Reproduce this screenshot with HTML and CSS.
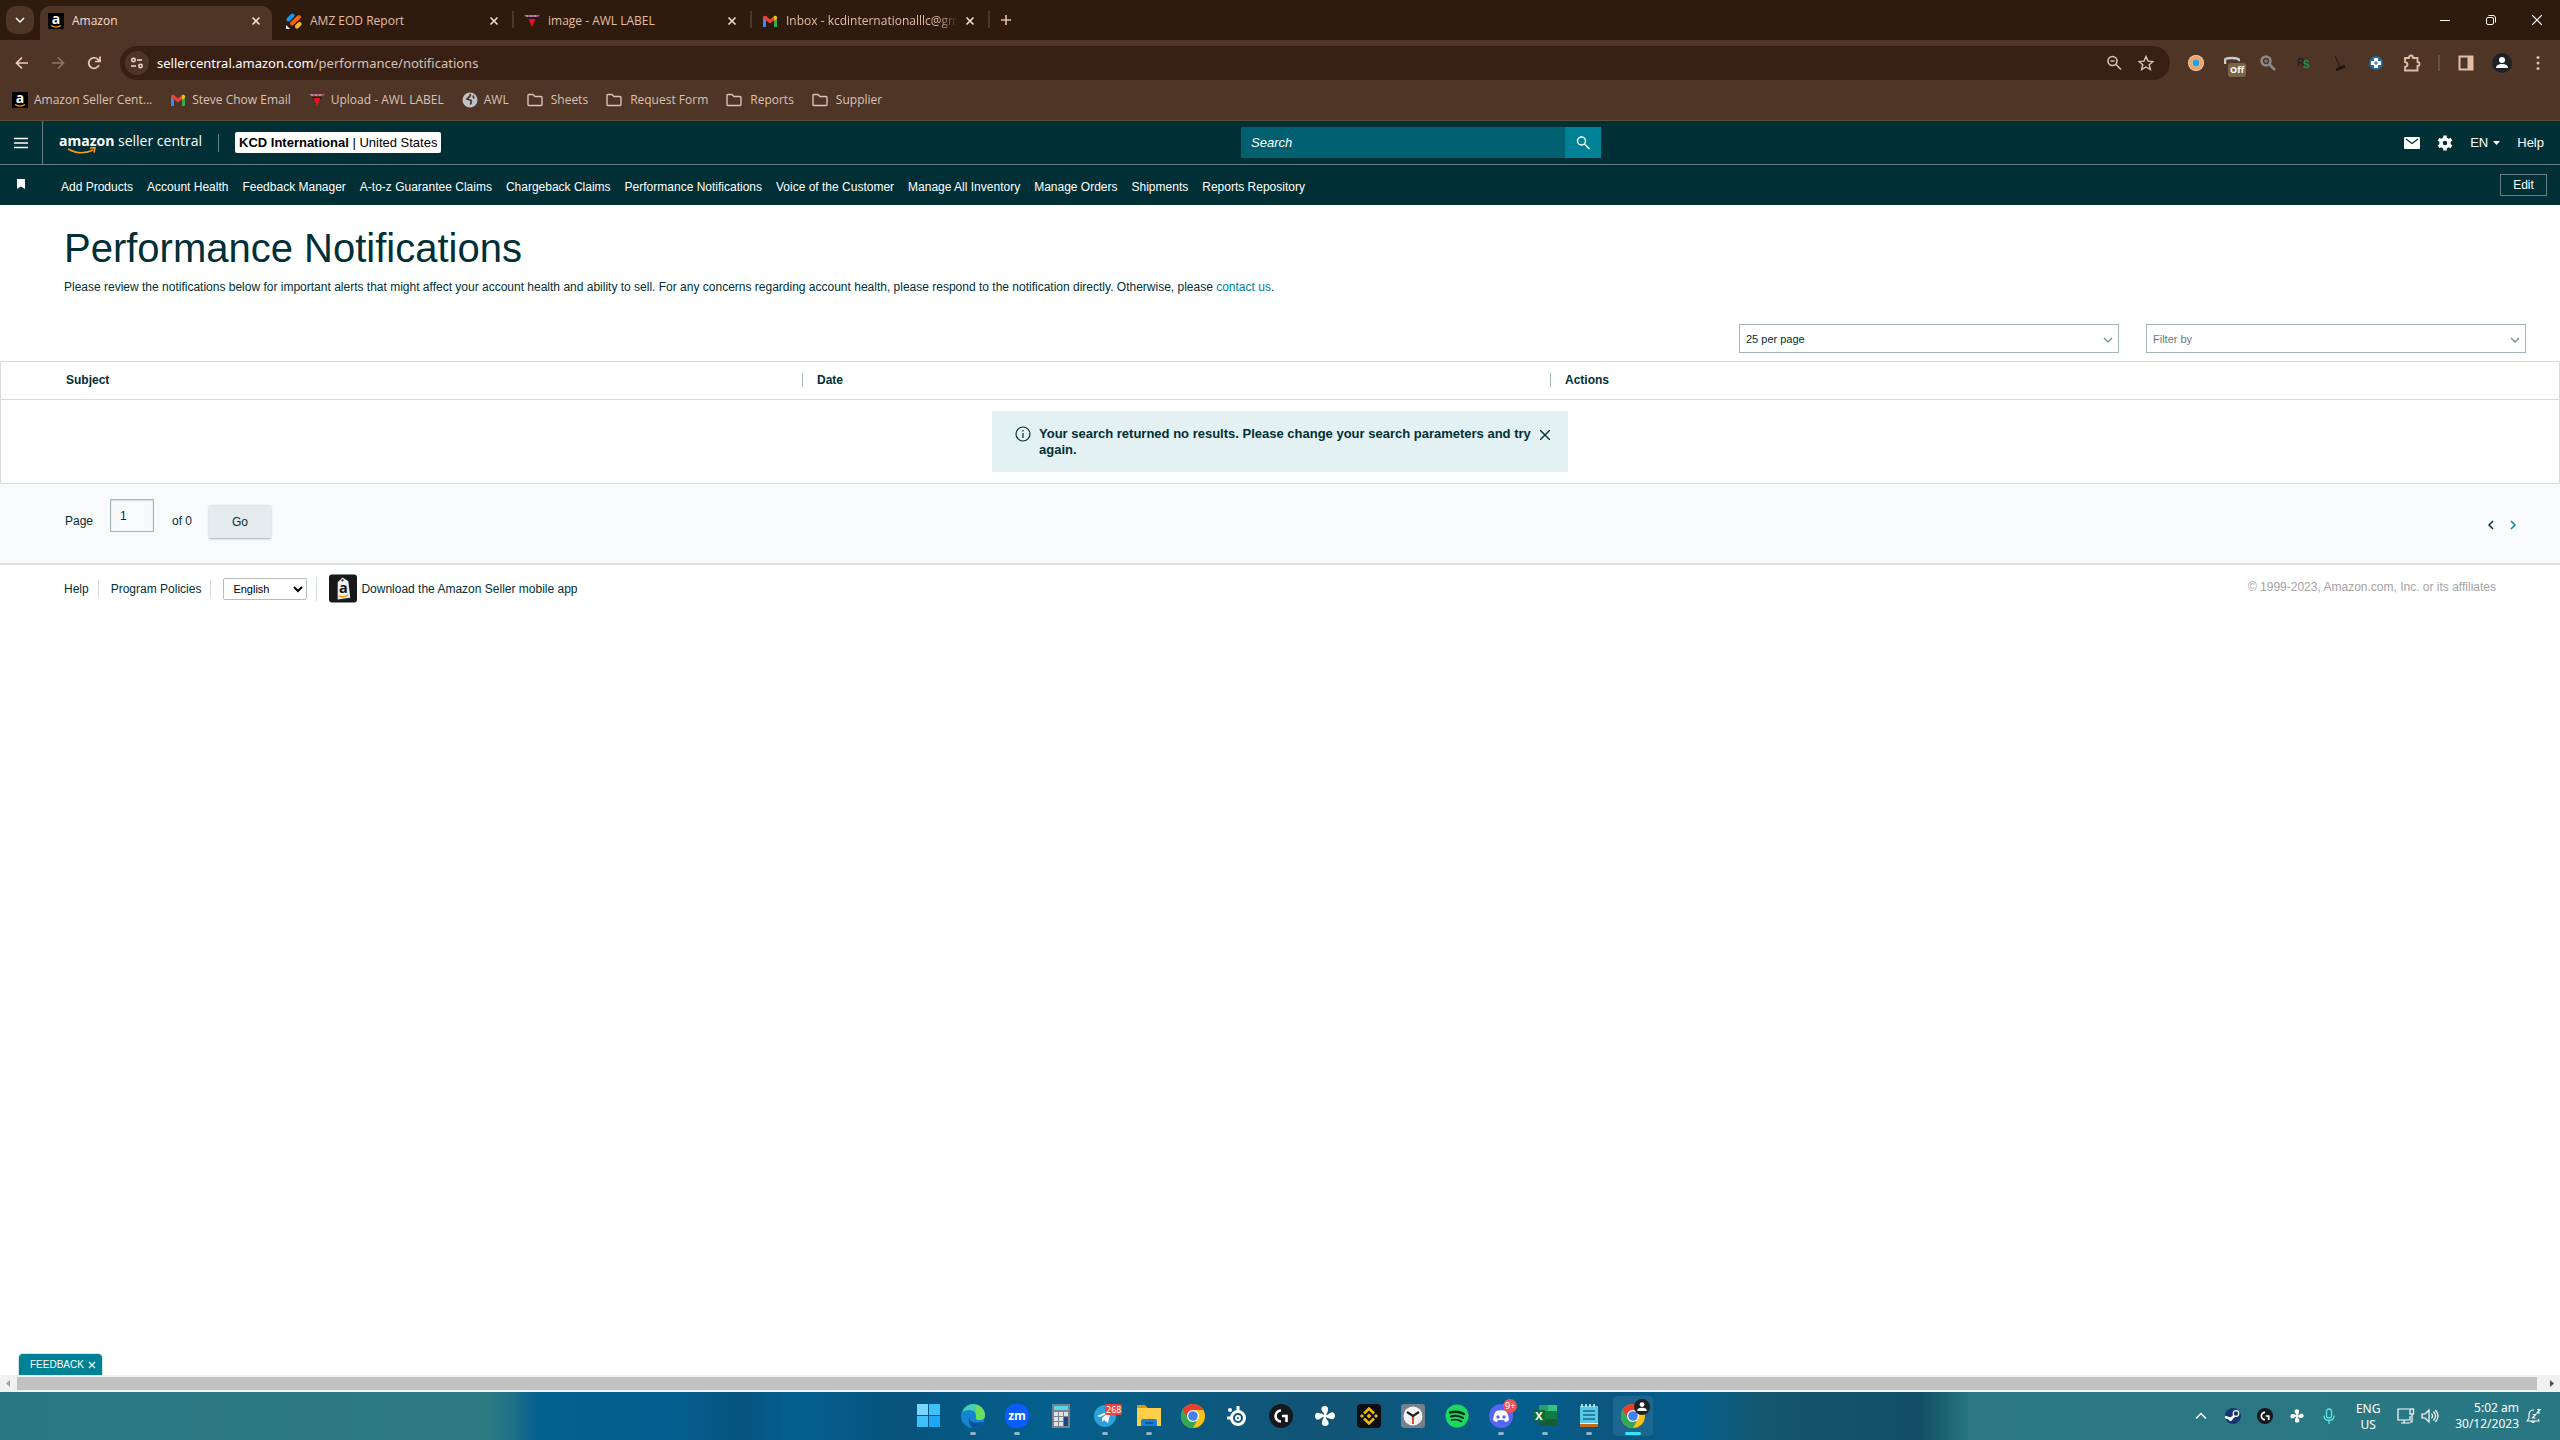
FILE: index.html
```
<!DOCTYPE html>
<html lang="en">
<head>
	<meta charset="utf-8">
	<title>Amazon</title>
	<link rel="stylesheet" href="styles.css">
</head>
<body>
	<!-- Shared icons -->
	<svg class="defs" aria-hidden="true">
		<symbol id="i-close" viewBox="0 0 16 16"><path d="M4.5 4.5l7 7M11.5 4.5l-7 7" fill="none" stroke="currentColor" stroke-width="1.6"/></symbol>
		<symbol id="i-amazon" viewBox="0 0 16 16"><rect width="16" height="16" fill="#000"/><text x="8" y="11" text-anchor="middle" font-family="Open Sans" font-weight="bold" font-size="14" fill="#fff">a</text><path d="M3 12.5q5 3.200 10 0" fill="none" stroke="#f90" stroke-width="1.300"/></symbol>
		<symbol id="i-gmail" viewBox="0 0 16 16"><path d="M1 4v10h3V7z" fill="#4285f4"/><path d="M15 4v10h-3V7z" fill="#34a853"/><path d="M1 4q1-2 3-1l4 3.500L12 3v4l-4 3.500L1 5z" fill="#ea4335"/><path d="M12 3q2-1 3 1v1.500L12 8z" fill="#fbbc04"/></symbol>
		<symbol id="i-awl" viewBox="0 0 16 16"><path d="M0 2h16l-2 2H2z" fill="#a05a9a"/><path d="M2 3h2M6 3h2M10 3h2" stroke="#e6c24a"/><path d="M3 5h10l-2 3H5z" fill="#24123f"/><path d="M4.500 6h7L8 14z" fill="#f0101c"/></symbol>
		<symbol id="i-folder" viewBox="0 0 16 16"><path d="M1 3.500q0-1 1-1h4l2 2h6q1 0 1 1v7q0 1-1 1H2q-1 0-1-1z" fill="none" stroke="currentColor" stroke-width="1.400"/></symbol>
		<symbol id="i-chrome" viewBox="0 0 24 24"><circle cx="12" cy="12" r="12" fill="#fbc116"/><path d="M12 12L1.600 6A12 12 0 0 0 12 24l5-9z" fill="#34a853"/><path d="M12 12H5.500L1.600 6a12 12 0 0 1 20.800 0H12z" fill="#ea3e30"/><circle cx="12" cy="12" r="6" fill="#fff"/><circle cx="12" cy="12" r="4.800" fill="#3f82ef"/></symbol>
		<symbol id="i-fan" viewBox="0 0 24 24"><g fill="#fff"><path d="M12 12Q11 9 9 7 7 3 11 2q5 0 4 4 0 3-3 6z"/><path d="M12 12Q11 9 9 7 7 3 11 2q5 0 4 4 0 3-3 6z" transform="rotate(90 12 12)"/><path d="M12 12Q11 9 9 7 7 3 11 2q5 0 4 4 0 3-3 6z" transform="rotate(180 12 12)"/><path d="M12 12Q11 9 9 7 7 3 11 2q5 0 4 4 0 3-3 6z" transform="rotate(270 12 12)"/><circle cx="12" cy="12" r="2"/></g></symbol>
		<symbol id="i-ghub" viewBox="0 0 24 24"><circle cx="12" cy="12" r="12" fill="#17181b"/><path d="M12 6.500a5.500 5.500 0 1 0 0 11M13 12h4.500v6" fill="none" stroke="#fff" stroke-width="2.600"/></symbol>
		<symbol id="i-person" viewBox="0 0 20 20"><circle cx="10" cy="10" r="10" fill="#202124"/><circle cx="10" cy="7" r="3" fill="#fff"/><path d="M4 15q0-4 6-4t6 4z" fill="#fff"/></symbol>
		<symbol id="i-down" viewBox="0 0 10 10"><path d="M1 3l4 4 4-4" fill="none" stroke="currentColor" stroke-width="1.500"/></symbol>
	</svg>

	<div class="browser">
		<div class="tabstrip">
			<button class="tab-search" aria-label="Search tabs"><svg width="10" height="10"><use href="#i-down"/></svg></button>
			<div class="tab active">
				<svg width="16" height="16"><use href="#i-amazon"/></svg>
				<span class="tab-title">Amazon</span>
				<button class="tab-close" aria-label="Close"><svg width="16" height="16"><use href="#i-close"/></svg></button>
			</div>
			<div class="tab">
				<svg width="16" height="16" viewBox="0 0 16 16" fill="none" stroke-width="4" stroke-linecap="round"><path d="M2.500 6.500l4-4" stroke="#0a99ff"/><path d="M6 10.500L13 4" stroke="#ff6100"/><path d="M11 13.500l2.500-2.500" stroke="#ffb629"/><path d="M0 12l4 4H0z" fill="#fff"/></svg>
				<span class="tab-title">AMZ EOD Report</span>
				<button class="tab-close" aria-label="Close"><svg width="16" height="16"><use href="#i-close"/></svg></button>
			</div>
			<div class="tab">
				<svg width="16" height="16"><use href="#i-awl"/></svg>
				<span class="tab-title">image - AWL LABEL</span>
				<button class="tab-close" aria-label="Close"><svg width="16" height="16"><use href="#i-close"/></svg></button>
			</div>
			<div class="tab">
				<svg width="16" height="16"><use href="#i-gmail"/></svg>
				<span class="tab-title fade">Inbox - kcdinternationalllc@gm</span>
				<button class="tab-close" aria-label="Close"><svg width="16" height="16"><use href="#i-close"/></svg></button>
			</div>
			<button class="new-tab" aria-label="New tab"><svg width="10" height="10" viewBox="0 0 10 10"><path d="M5 0v10M0 5h10" stroke="currentColor" stroke-width="1.600"/></svg></button>
			<div class="window-buttons">
				<button aria-label="Minimize"><svg width="10" height="10" viewBox="0 0 10 10"><path d="M0 5.500h10" stroke="#fff"/></svg></button>
				<button aria-label="Restore"><svg width="10" height="10" viewBox="0 0 10 10" fill="none" stroke="#fff"><rect x=".5" y="2.500" width="7" height="7" rx="1.500"/><path d="M2.500.500H7q2.500 0 2.500 2.500v4.500"/></svg></button>
				<button aria-label="Close window"><svg width="10" height="10" viewBox="0 0 10 10"><path d="M0 0l10 10M10 0L0 10" stroke="#fff" stroke-width="1.200"/></svg></button>
			</div>
		</div>

		<div class="toolbar">
			<button class="nav-button" aria-label="Back"><svg width="16" height="16" viewBox="0 0 16 16" fill="none" stroke="currentColor" stroke-width="1.700"><path d="M14 8H3M8 2.500L2.500 8 8 13.500"/></svg></button>
			<button class="nav-button off" aria-label="Forward"><svg width="16" height="16" viewBox="0 0 16 16" fill="none" stroke="currentColor" stroke-width="1.700"><path d="M2 8h11M8 2.500L13.500 8 8 13.500"/></svg></button>
			<button class="nav-button" aria-label="Reload"><svg width="16" height="16" viewBox="0 0 16 16" fill="none" stroke="currentColor" stroke-width="1.700"><path d="M13 10A5.300 5.300 0 1 1 12 4.500L13.500 6M14 1.500v5H9"/></svg></button>
			<div class="omnibox">
				<button class="site-info" aria-label="Site information"><svg width="14" height="14" viewBox="0 0 14 14" fill="none" stroke="currentColor" stroke-width="1.500"><circle cx="3.500" cy="4" r="1.700"/><path d="M7 4h5M1 10h5"/><circle cx="10.500" cy="10" r="1.700"/></svg></button>
				<span class="url"><b>sellercentral.amazon.com</b>/performance/notifications</span>
				<svg width="16" height="16" viewBox="0 0 16 16" fill="none" stroke="currentColor" stroke-width="1.600"><circle cx="6.500" cy="6" r="4.500"/><path d="M10 9.500l5 5M4.500 6h4"/></svg>
				<svg width="16" height="16" viewBox="0 0 16 16" fill="none" stroke="currentColor" stroke-width="1.400"><path d="M8 1.500l2 4.600 5 .400-3.800 3.200 1.200 4.800L8 12l-4.400 2.500 1.200-4.800L1 6.500l5-.400z"/></svg>
			</div>
			<div class="extensions">
				<svg width="16" height="16" viewBox="0 0 16 16"><circle cx="8" cy="8" r="8" fill="#f2dfc9"/><circle cx="8" cy="8" r="5.500" fill="none" stroke="#f5a05c" stroke-width="3.500"/><circle cx="8" cy="8" r="3.400" fill="#1fa0ea"/></svg>
				<div class="ext-off">
					<svg width="16" height="16" viewBox="0 0 16 16"><path d="M1 9V5q0-2 7-2t8 3" fill="none" stroke="#c9ccce" stroke-width="2.500"/></svg>
					<span>Off</span>
				</div>
				<svg width="16" height="16" viewBox="0 0 16 16" fill="none" stroke="#8a8a88" stroke-width="2.600"><circle cx="6" cy="6" r="4.500"/><path d="M9.500 9.500l5.500 5.500"/><path d="M6 4v4M4 6h4" stroke-width="1"/></svg>
				<svg width="16" height="16" viewBox="0 0 16 16" font-family="Liberation Sans" font-weight="bold" font-size="10"><text x="1" y="11" fill="#222">R</text><text x="7" y="13" fill="#159447">S</text></svg>
				<svg width="16" height="16" viewBox="0 0 16 16" fill="none" stroke="#1d1613"><path d="M3 1l5 11"/><path d="M4 15l9-4" stroke-width="2.500"/></svg>
				<svg width="16" height="16" viewBox="0 0 16 16"><circle cx="8" cy="8" r="7" fill="#26699b"/><path d="M8 3v10M3 8h10" stroke="#fff" stroke-width="4"/><path d="M8 6v4M6 8h4" stroke="#26699b"/></svg>
				<svg class="puzzle" width="18" height="18" viewBox="0 0 18 18" fill="none" stroke="currentColor" stroke-width="1.800"><path d="M2 4h4q0-2.500 2-2.500T10 4h4.500v4q2 0 2 2t-2 2v4.500H2V13q2.500-.500 2.500-2.500T2 8z"/></svg>
			</div>
			<span class="toolbar-line"></span>
			<div class="profile">
				<svg width="16" height="16" viewBox="0 0 16 16" fill="none" stroke="currentColor" stroke-width="2"><rect x="1.500" y="1.500" width="13" height="13"/><path d="M12 2v12" stroke-width="5"/></svg>
				<svg width="20" height="20"><use href="#i-person"/></svg>
				<svg width="16" height="16" viewBox="0 0 16 16" fill="currentColor"><circle cx="8" cy="2.500" r="1.500"/><circle cx="8" cy="8" r="1.500"/><circle cx="8" cy="13.500" r="1.500"/></svg>
			</div>
		</div>

		<div class="bookmarks">
			<a href="#"><svg width="16" height="16"><use href="#i-amazon"/></svg>Amazon Seller Cent...</a>
			<a href="#"><svg width="16" height="16"><use href="#i-gmail"/></svg>Steve Chow Email</a>
			<a href="#"><svg width="16" height="16"><use href="#i-awl"/></svg>Upload - AWL LABEL</a>
			<a href="#"><svg width="16" height="16" viewBox="0 0 16 16"><circle cx="8" cy="8" r="7.500" fill="#bfc3c7"/><path d="M8 2q1 2-1 3L5 7l4 1.500q1 2-1 4M11 3.500l1 3" fill="none" stroke="#4f3526" stroke-width="1.700"/></svg>AWL</a>
			<a class="folder" href="#"><svg width="16" height="16"><use href="#i-folder"/></svg>Sheets</a>
			<a class="folder" href="#"><svg width="16" height="16"><use href="#i-folder"/></svg>Request Form</a>
			<a class="folder" href="#"><svg width="16" height="16"><use href="#i-folder"/></svg>Reports</a>
			<a class="folder" href="#"><svg width="16" height="16"><use href="#i-folder"/></svg>Supplier</a>
		</div>
	</div>

	<header class="sc-header">
		<div class="sc-top">
			<div class="sc-left">
				<button class="menu" aria-label="Menu"><svg width="14" height="12" viewBox="0 0 14 12"><path d="M0 1.500h14M0 6h14M0 10.500h14" stroke="#fff" stroke-width="1.600"/></svg></button>
				<a class="logo" href="#">
					<span><b>amazon</b> seller central</span>
					<svg class="smile" width="30" height="8" viewBox="0 0 30 8" fill="none" stroke="#f7981d" stroke-width="1.600"><path d="M1 2q13 7 25 1M23 1l5-.300-1 5"/></svg>
				</a>
				<span class="top-line"></span>
				<button class="account"><b>KCD International</b> | United States</button>
			</div>
			<form class="search">
				<input type="text" placeholder="Search" aria-label="Search">
				<button type="button" aria-label="Search"><svg width="16" height="16" viewBox="0 0 16 16" fill="none" stroke="#fff" stroke-width="1.500"><circle cx="6.500" cy="6" r="4"/><path d="M9.500 9l5 5"/></svg></button>
			</form>
			<div class="sc-right">
				<svg width="16" height="12" viewBox="0 0 16 12"><rect width="16" height="12" rx="1" fill="#fff"/><path d="M2 2l6 4.500L14 2" fill="none" stroke="#002f36" stroke-width="1.300"/></svg>
				<svg width="16" height="16" viewBox="0 0 16 16" fill="none" stroke="#fff"><circle cx="8" cy="8" r="4" stroke-width="3.500"/><path d="M8 .500v3M8 12.500v3M1.500 4.200l2.600 1.500M11.900 10.300l2.600 1.500M1.500 11.800l2.600-1.500M11.900 5.700l2.600-1.500" stroke-width="3.500"/></svg>
				<button class="lang">EN<svg width="7" height="4" viewBox="0 0 7 4"><path d="M0 0h7L3.500 4z" fill="#fff"/></svg></button>
				<a href="#">Help</a>
			</div>
		</div>
		<nav class="sc-nav">
			<svg class="flag" width="8" height="10" viewBox="0 0 8 10"><path d="M0 0h8v10L4 7.500 0 10z" fill="#fff"/></svg>
			<a href="#">Add Products</a>
			<a href="#">Account Health</a>
			<a href="#">Feedback Manager</a>
			<a href="#">A-to-z Guarantee Claims</a>
			<a href="#">Chargeback Claims</a>
			<a href="#">Performance Notifications</a>
			<a href="#">Voice of the Customer</a>
			<a href="#">Manage All Inventory</a>
			<a href="#">Manage Orders</a>
			<a href="#">Shipments</a>
			<a href="#">Reports Repository</a>
			<button class="edit">Edit</button>
		</nav>
	</header>

	<main>
		<div class="intro">
			<h1>Performance Notifications</h1>
			<p>Please review the notifications below for important alerts that might affect your account health and ability to sell. For any concerns regarding account health, please respond to the notification directly. Otherwise, please <a href="#">contact us</a>.</p>
		</div>

		<div class="filters">
			<div class="picker">
				<select aria-label="Results per page"><option>25 per page</option></select>
				<svg width="10" height="10"><use href="#i-down"/></svg>
			</div>
			<div class="picker empty">
				<select aria-label="Filter by"><option>Filter by</option></select>
				<svg width="10" height="10"><use href="#i-down"/></svg>
			</div>
		</div>

		<table class="results">
			<thead>
				<tr><th class="subject"><span>Subject</span></th><th class="date"><span>Date</span></th><th><span>Actions</span></th></tr>
			</thead>
			<tbody>
				<tr>
					<td colspan="3">
						<div class="alert">
							<svg width="16" height="16" viewBox="0 0 16 16" fill="none" stroke="#002f36" stroke-width="1.200"><circle cx="8" cy="8" r="7"/><path d="M8 7v5M8 4v1.500"/></svg>
							<p>Your search returned no results. Please change your search parameters and try again.</p>
							<button aria-label="Dismiss"><svg width="10" height="10" viewBox="0 0 10 10"><path d="M0 0l10 10M10 0L0 10" stroke="#002f36" stroke-width="1.400"/></svg></button>
						</div>
					</td>
				</tr>
			</tbody>
		</table>

		<div class="pager">
			<label for="page">Page</label>
			<input id="page" type="text" value="1">
			<span class="of">of 0</span>
			<button class="go">Go</button>
			<div class="arrows">
				<button aria-label="Previous page"><svg width="6" height="10" viewBox="0 0 6 10"><path d="M5 1L1 5l4 4" fill="none" stroke="#002f36" stroke-width="1.500"/></svg></button>
				<button aria-label="Next page"><svg width="6" height="10" viewBox="0 0 6 10"><path d="M1 1l4 4-4 4" fill="none" stroke="#008296" stroke-width="1.500"/></svg></button>
			</div>
		</div>

		<footer>
			<a class="cell" href="#">Help</a>
			<a class="cell policies" href="#">Program Policies</a>
			<div class="cell language"><select aria-label="Language"><option>English</option></select></div>
			<a class="app" href="#">
				<svg width="28" height="29" viewBox="0 0 29 29"><rect width="29" height="29" rx="3" fill="#17181a"/><path d="M9 8l5-5 6 4 2 17-13 2z" fill="#eee"/><circle cx="14" cy="6" r="1.200" fill="#222"/><text x="15" y="19" text-anchor="middle" font-family="Open Sans" font-weight="bold" font-size="15" fill="#111">a</text><path d="M10 22q5 3 10-1" fill="none" stroke="#f90" stroke-width="1.400"/></svg>
				Download the Amazon Seller mobile app
			</a>
			<span class="copyright">© 1999-2023, Amazon.com, Inc. or its affiliates</span>
		</footer>
	</main>

	<button class="feedback">FEEDBACK <svg width="8" height="8" viewBox="0 0 8 8"><path d="M1 1l6 6M7 1L1 7" stroke="#fff" stroke-width="1.200"/></svg></button>

	<div class="scrollbar">
		<svg width="17" height="17" viewBox="0 0 17 17"><path d="M10 5v7L6 8.500z" fill="#a3a3a3"/></svg>
		<div class="thumb"></div>
		<svg width="23" height="17" viewBox="0 0 23 17"><path d="M13 5v7l4-3.500z" fill="#505050"/></svg>
	</div>

	<div class="taskbar">
		<div class="apps">
			<div class="app-icon"><svg width="24" height="24" viewBox="0 0 24 24" fill="#3fc0fb"><path d="M0 0h11v11H0z" fill="#7ad6ff"/><path d="M12 0h11v11H12zM0 12h11v11H0z"/><path d="M12 12h11v11H12z" fill="#1ea6f8"/></svg></div>
			<div class="app-icon open"><svg width="24" height="24" viewBox="0 0 24 24"><circle cx="12" cy="12" r="12" fill="#1583cf"/><path d="M1 9Q4 0 13 0q10 1 11 11 0 5-6 5-4 0-3-4 0-6-7-6-5 0-7 3z" fill="#45cfae"/><path d="M15 1q8 2 9 10 0 5-6 5-4 0-3-4z" fill="#6be05a"/><path d="M8 13q1 8 14 5-3 6-10 6-5-3-4-11z" fill="#0c4f9d"/></svg></div>
			<div class="app-icon open"><svg width="24" height="24" viewBox="0 0 24 24"><rect width="24" height="24" rx="10" fill="#0b5cff"/><text x="12" y="16" text-anchor="middle" font-family="Open Sans" font-weight="bold" font-size="12" fill="#fff">zm</text></svg></div>
			<div class="app-icon"><svg width="24" height="24" viewBox="0 0 24 24"><rect x="3" width="18" height="24" rx="1" fill="#7b828a"/><rect x="5" y="2" width="14" height="4" fill="#4fd8f2"/><path d="M5 8h4v4H5zM10 8h4v4h-4zM15 8h4v4h-4zM5 13h4v4H5zM10 13h4v4h-4zM5 18h4v4H5zM10 18h4v4h-4z" fill="#dfe3e7"/><path d="M15 13h4v9h-4z" fill="#124789"/></svg></div>
			<div class="app-icon open"><svg width="24" height="24" viewBox="0 0 24 24"><circle cx="12" cy="12" r="11" fill="#2aa1da"/><path d="M4 12l14-6-3 13-4-3-2 2v-4l6-5-8 4z" fill="#fff"/></svg><span class="count">268</span></div>
			<div class="app-icon open"><svg width="24" height="24" viewBox="0 0 24 24"><path d="M0 1h8l3 3v3H0z" fill="#d59a12"/><path d="M0 4h24v18H0z" fill="#ffcf4a"/><path d="M4 22v-5q0-2 2-2h12q2 0 2 2v5z" fill="#1a7fd0"/><path d="M8 19h8" stroke="#0b57a0" stroke-width="2"/></svg></div>
			<div class="app-icon"><svg width="24" height="24"><use href="#i-chrome"/></svg></div>
			<div class="app-icon"><svg width="24" height="24" viewBox="0 0 24 24" fill="none" stroke="#fff"><circle cx="13" cy="14" r="6.500" stroke-width="3"/><circle cx="13" cy="14" r="2" stroke-width="2"/><path d="M13 2v5M2 14h5" stroke-width="3"/><circle cx="5" cy="6" r="1" stroke-width="2"/></svg></div>
			<div class="app-icon"><svg width="24" height="24"><use href="#i-ghub"/></svg></div>
			<div class="app-icon"><svg width="24" height="24"><use href="#i-fan"/></svg></div>
			<div class="app-icon"><svg width="24" height="24" viewBox="0 0 24 24"><rect width="24" height="24" rx="4" fill="#0c0e12"/><path d="M7 9.500l5-5 5 5M7 14.500l5 5 5-5" fill="none" stroke="#f0b90b" stroke-width="2.600"/><path d="M12 9.500l2.500 2.500-2.500 2.500L9.500 12zM5 10l2 2-2 2-2-2zM19 10l2 2-2 2-2-2z" fill="#f0b90b"/></svg></div>
			<div class="app-icon"><svg width="24" height="24" viewBox="0 0 24 24"><rect width="24" height="24" rx="3" fill="#77818c"/><circle cx="12" cy="12" r="9.500" fill="#f2f2f2"/><path d="M6 8l6 4 6-4M12 12v3" fill="none" stroke="#222" stroke-width="2.200"/><path d="M12 13v7" stroke="#d9531e" stroke-width="2"/></svg></div>
			<div class="app-icon"><svg width="24" height="24" viewBox="0 0 24 24" fill="none" stroke="#10251a" stroke-linecap="round"><circle cx="12" cy="12" r="11.500" fill="#1ed760" stroke="none"/><path d="M5 8.500q7-2 14 1.500" stroke-width="2.400"/><path d="M6 12.500q6-2 12 1.500" stroke-width="2"/><path d="M6.500 16q5-1.500 10 1.500" stroke-width="1.600"/></svg></div>
			<div class="app-icon open"><svg width="24" height="24" viewBox="0 0 24 24"><circle cx="12" cy="12" r="12" fill="#5865f2"/><path d="M7 7q5-1.500 10 0 3 4 3 9-2 2-4 2l-1-2H9l-1 2q-2 0-4-2 0-5 3-9z" fill="#fff"/><circle cx="9" cy="13" r="1.700" fill="#5865f2"/><circle cx="15" cy="13" r="1.700" fill="#5865f2"/></svg><span class="count round">9+</span></div>
			<div class="app-icon open"><svg width="24" height="24" viewBox="0 0 24 24"><path d="M6 1h9v6H6z" fill="#21a366"/><path d="M15 1h9v6h-9z" fill="#33c481"/><path d="M6 7h18v8H6z" fill="#107c41"/><path d="M6 15h18v7H6z" fill="#185c37"/><path d="M0 6h12v12H0z" fill="#0f6b39"/><text x="6" y="16" text-anchor="middle" font-family="Open Sans" font-weight="bold" font-size="11" fill="#fff">X</text></svg></div>
			<div class="app-icon open"><svg width="24" height="24" viewBox="0 0 24 24"><path d="M3 2h18v18H3z" fill="#5cc8e4"/><path d="M3 20h18v3H3z" fill="#c5691d"/><path d="M3 19.500h18" stroke="#fff"/><path d="M6 7h12M6 11h12M6 15h12" stroke="#146a92" stroke-width="1.500"/><path d="M5 0v3M9 0v3M13 0v3M17 0v3" stroke="#e8fbff" stroke-width="1.500"/></svg></div>
			<div class="app-icon open current"><svg width="24" height="24"><use href="#i-chrome"/></svg><svg class="who" width="16" height="16"><use href="#i-person"/></svg></div>
		</div>
		<div class="tray">
			<div class="tray-icons">
				<svg width="16" height="16" viewBox="0 0 16 16"><path d="M3 10.500l5-5 5 5" fill="none" stroke="#fff" stroke-width="1.500"/></svg>
				<svg width="16" height="16" viewBox="0 0 16 16"><circle cx="8" cy="8" r="8" fill="#16366e"/><path d="M0 9l6 2 4-4" fill="none" stroke="#fff" stroke-width="2.500"/><circle cx="11" cy="5.500" r="2.800" fill="#16366e" stroke="#fff" stroke-width="1.200"/><circle cx="5.500" cy="11" r="2" fill="#fff"/></svg>
				<svg width="16" height="16"><use href="#i-ghub"/></svg>
				<svg width="16" height="16"><use href="#i-fan"/></svg>
				<svg width="16" height="16" viewBox="0 0 16 16" fill="none" stroke="#5fe3ea" stroke-width="1.300"><rect x="5.500" y="1" width="5" height="9" rx="2.500"/><path d="M3 7.500q0 5 5 5t5-5M8 12.500V16"/></svg>
			</div>
			<span class="input-lang">ENG<br>US</span>
			<svg width="18" height="18" viewBox="0 0 18 18" fill="none" stroke="#fff" stroke-width="1.200"><path d="M12 2H1v11h12V9M4 16h9M7 13v3"/><rect x="13" y="2" width="3.500" height="5"/><path d="M15 7v8h-2"/></svg>
			<svg class="speaker" width="18" height="18" viewBox="0 0 18 18" fill="none" stroke="#fff" stroke-width="1.200"><path d="M1 7h3l4-4v12l-4-4H1zM10.500 6.500q2 2.500 0 5M12.500 4.500q4 4.500 0 9M14.500 3q5 6 0 12"/></svg>
			<span class="clock">5:02 am<br>30/12/2023</span>
			<svg width="16" height="16" viewBox="0 0 16 16" fill="none" stroke="#fff" stroke-width="1.200"><path d="M8 2Q3 2 3 7v3l-2 3h12l-1-2M5.500 13.500q1.500 2 3 0M6.500 6.500h3l-3 3.500h3M11 1.500h3L11 5h3"/></svg>
		</div>
	</div>
</body>
</html>
```
FILE: styles.css
```
* { box-sizing: border-box; }
html, body, h1, p { margin: 0; padding: 0; }
body { display: flex; flex-direction: column; min-height: 100vh; background: #fff; color: #002f36; font-family: "Liberation Sans", Arial, sans-serif; font-size: 12px; line-height: 16px; }
button, input, select { margin: 0; padding: 0; border: 0; border-radius: 0; background: none; color: inherit; font: inherit; }
a { color: inherit; text-decoration: none; }
svg { display: block; flex: none; }
.defs { display: none; }

/* Browser window */

.browser { background: #4f3526; color: #e3bda6; border-bottom: 1px solid #5f4a3e; font-family: "Open Sans", "Noto Sans", sans-serif; }
.tabstrip { display: flex; align-items: flex-end; height: 40px; padding-left: 6px; background: #2e1b0d; }
.tab-search { display: flex; align-items: center; justify-content: center; width: 28px; height: 28px; margin: 0 6px 6px 0; border-radius: 10px; background: #4f3526; color: #fff; }
.tab { display: flex; align-items: center; width: 238px; height: 34px; padding: 0 10px 4px; border-right: 2px solid #4f3526; border-image: linear-gradient(transparent 6px, #4f3526 6px, #4f3526 22px, transparent 22px) 1; }
.tab.active { width: 232px; margin-right: 4px; padding: 0 8px 4px; border: 0; border-radius: 10px 10px 0 0; background: #4f3526; color: #f5ddd0; }
.tab-title { flex: 1; margin-left: 8px; overflow: hidden; white-space: nowrap; }
.tab-title.fade { -webkit-mask-image: linear-gradient(to right, #000 88%, transparent); mask-image: linear-gradient(to right, #000 88%, transparent); }
.tab-close { margin-left: 4px; color: #f5ddd0; }
.new-tab { align-self: center; margin-left: 11px; }
.window-buttons { display: flex; align-self: center; margin-left: auto; }
.window-buttons button { display: flex; justify-content: center; width: 46px; }

.toolbar { display: flex; align-items: center; height: 46px; padding: 0 14px; }
.nav-button { width: 16px; margin-right: 20px; color: #f0cdb9; }
.nav-button.off { color: #8f7263; }
.omnibox { display: flex; flex: 1; align-items: center; gap: 16px; height: 34px; padding: 0 16px 0 5px; margin-left: -2px; border-radius: 17px; background: #382114; color: #d8c2b6; font-family: "Noto Sans", sans-serif; font-size: 13px; }
.site-info { display: flex; align-items: center; justify-content: center; width: 24px; height: 24px; margin-right: -8px; border-radius: 12px; background: #4f3526; color: #f5ddd0; }
.url { flex: 1; }
.url b { color: #fff; font-weight: normal; }
.extensions { display: flex; align-items: center; gap: 20px; margin-left: 18px; }
.ext-off { position: relative; }
.ext-off span { position: absolute; left: 4px; top: 8px; padding: 0 2px; border-radius: 3px; background: #7d6548; color: #fff; font-size: 9px; font-weight: bold; line-height: 14px; }
.puzzle { margin: 0 -1px; }
.toolbar-line { width: 2px; height: 16px; margin: 0 18px; background: #6b4d3d; }
.profile { display: flex; align-items: center; gap: 18px; }

.bookmarks { display: flex; gap: 18px; height: 34px; padding: 6px 12px; color: #d9c3b6; }
.bookmarks a { display: flex; align-items: center; gap: 6px; height: 16px; }
.bookmarks .folder { gap: 8px; }

/* Seller Central header */

.sc-header { background: #002f36; color: #fff; }
.sc-top { display: grid; grid-template-columns: 1241fr 360px 959fr; align-items: center; height: 44px; border-bottom: 1px solid #667f84; font-size: 13px; }
.sc-left { display: flex; align-items: center; }
.menu { display: flex; align-items: center; justify-content: center; width: 43px; height: 43px; border-right: 1px solid #667f84; }
.logo { position: relative; margin-left: 16px; padding-bottom: 4px; font-family: "Open Sans", sans-serif; font-size: 14px; white-space: nowrap; }
.smile { position: absolute; left: 8px; top: 14px; }
.top-line { width: 1px; height: 18px; margin: 0 16px; background: #667f84; }
.account { height: 21px; padding: 0 4px; border-radius: 2px; background: #fff; color: #000; white-space: nowrap; }
.search { display: flex; height: 31px; }
.search input { flex: 1; min-width: 0; padding: 0 10px; background: #00606f; }
.search input::placeholder { color: #fff; font-style: italic; opacity: 1; }
.search button { display: flex; align-items: center; justify-content: center; width: 36px; background: #008296; }
.sc-right { display: flex; align-items: center; justify-content: flex-end; gap: 17px; padding-right: 16px; }
.lang { display: flex; align-items: center; gap: 5px; }
.sc-nav { display: flex; align-items: center; gap: 14px; height: 40px; padding: 0 13px 0 17px; white-space: nowrap; }
.sc-nav a { margin-top: 4px; }
.flag { margin: 0 22px 2px 0; }
.edit { width: 47px; height: 22px; margin-left: auto; border: 1px solid #667f84; }

/* Notifications page */

main { flex: 1; }
.intro { padding: 19px 64px 0; }
h1 { font-size: 40px; font-weight: normal; line-height: 48px; }
.intro p { margin-top: 7px; }
.intro a { color: #008296; }
.filters { display: flex; justify-content: flex-end; gap: 27px; padding: 29px 34px 8px; }
.picker { position: relative; width: 380px; max-width: 40%; }
.picker select { width: 100%; height: 29px; padding: 0 6px; border: 1px solid #a2b4b7; appearance: none; font-size: 11px; }
.picker.empty { color: #66797c; }
.picker svg { position: absolute; right: 6px; top: 11px; color: #7d9498; }
.results { width: 100%; border: 1px solid #d5dbdb; border-collapse: separate; border-spacing: 0; box-shadow: 0 1px 2px #d5dbdb; }
.results th { height: 38px; padding: 0 0 2px; border-bottom: 1px solid #d5dbdb; text-align: left; }
.results th span { padding-left: 14px; border-left: 1px solid #a2b4b7; }
.results .subject { width: 801px; }
.results .subject span { padding-left: 65px; border: 0; }
.results .date { width: 748px; }
.results td { padding: 11px 0; }
.alert { display: flex; align-items: flex-start; gap: 8px; width: 576px; height: 61px; margin: 0 auto; padding: 15px 18px 0 23px; background: #e3f1f3; font-size: 13px; font-weight: bold; }
.alert p { flex: 1; }
.alert button { margin: 4px 0 0; }
.pager { display: flex; align-items: flex-start; height: 81px; padding: 15px 42px 0 65px; border-bottom: 2px solid #dfe3e6; background: #f8fafc; }
.pager label, .of { margin-top: 14px; }
.pager input { width: 44px; height: 33px; margin-left: 17px; padding: 0 9px; border: 1px solid #a2b4b7; box-shadow: inset 0 1px 2px #d5dbdb; }
.of { margin-left: 18px; }
.go { width: 62px; height: 33px; margin: 6px 0 0 17px; border-radius: 2px; background: #e3ebec; box-shadow: 0 1px 2px #a2b4b7; }
.arrows { display: flex; gap: 16px; margin: 21px 2px 0 auto; }

footer { display: flex; align-items: center; padding: 9px 64px; }
.cell { padding: 1px 9px 1px 0; border-right: 1px solid #d5dbdb; }
.policies, .language { padding-left: 12px; }
.language select { width: 84px; height: 22px; padding: 0 5px; border: 1px solid #b5bcbf; border-radius: 2px; color: #000; font-size: 11px; }
.app { display: flex; align-items: center; gap: 4px; margin-left: 12px; }
.copyright { margin-left: auto; padding-bottom: 4px; color: #a4a4a4; }
.feedback { display: flex; align-items: center; align-self: flex-start; gap: 4px; height: 22px; margin-left: 18px; padding: 0 6px 0 11px; border: 1px solid #cfe3e6; border-bottom: 0; border-radius: 5px 5px 0 0; background: #008296; color: #fff; font-size: 10px; }
.scrollbar { display: flex; height: 17px; background: #f1f1f1; }
.thumb { flex: 1; margin: 2px 0; background: #c1c1c1; }

/* Taskbar */

.taskbar { display: grid; grid-template-columns: 1fr auto 1fr; height: 48px; color: #fff; font-family: "Noto Sans", sans-serif; background: linear-gradient(to right, #297783 0, #2e7b84 19%, #1f7286 20%, #04608f 21%, #045f90 26%, #07557f 29%, #04608f 31%, #08547d 35%, #045f8c 41%, #125474 52%, #045f8f 59%, #0b5681 63%, #04608f 66%, #14566c 69%, #104f66 75%, #2b7883 77%, #297783 100%); }
.apps { display: flex; grid-column: 2; padding-left: 2px; }
.app-icon { position: relative; display: flex; align-items: center; justify-content: center; width: 40px; height: 40px; margin: 4px 2px; border-radius: 4px; }
.app-icon.open::after { content: ""; position: absolute; left: 17px; bottom: 1px; width: 6px; height: 3px; border-radius: 2px; background: #90b4c8; }
.app-icon.current { background: #1b678f; }
.app-icon.current::after { left: 12px; width: 16px; background: #2fe8fa; }
.who { position: absolute; right: 3px; top: 3px; }
.count { position: absolute; left: 20px; top: 8px; padding: 0 1px; border-radius: 2px; background: #f0413c; font-size: 9px; line-height: 11px; }
.count.round { left: 22px; top: 3px; padding: 0 2px; border-radius: 7px; background: #ee5457; line-height: 14px; }
.tray { display: flex; align-items: center; justify-content: flex-end; padding-right: 18px; }
.tray-icons { display: flex; gap: 16px; }
.input-lang { width: 40px; margin: 2px 9px 0 11px; text-align: center; }
.speaker { margin: 0 16px 0 6px; }
.clock { margin: 0 7px 0 0; text-align: right; }
```
